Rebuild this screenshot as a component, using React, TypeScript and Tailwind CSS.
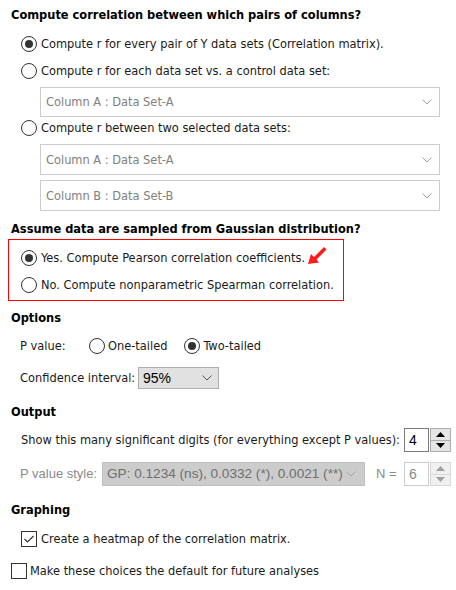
import type { ReactNode } from "react";

const tahoma = { fontFamily: '"DejaVu Sans Condensed", "DejaVu Sans", sans-serif' };
const arial = { fontFamily: '"Liberation Sans", Arial, sans-serif' };

function Radio({ checked = false }: { checked?: boolean }) {
  return (
    <span className="flex h-4 w-4 shrink-0 items-center justify-center rounded-full border border-[#333] bg-white">
      {checked && <span className="h-2 w-2 rounded-full bg-[#333]" />}
    </span>
  );
}

function Checkbox({ checked = false }: { checked?: boolean }) {
  return (
    <span className="flex h-4 w-4 shrink-0 items-center justify-center border border-[#333] bg-white">
      {checked && (
        <svg width="12" height="10" viewBox="0 0 12 10">
          <path d="M1.5 5 L4.5 8 L10.5 2" fill="none" stroke="#333" strokeWidth="1.2" />
        </svg>
      )}
    </span>
  );
}

function Chevron({ color = "#a0a0a0" }: { color?: string }) {
  return (
    <svg width="10" height="6" viewBox="0 0 10 6" className="shrink-0">
      <path d="M0.5 0.5 L5 5 L9.5 0.5" fill="none" stroke={color} strokeWidth="1" />
    </svg>
  );
}

function Select({ label, className = "" }: { label: string; className?: string }) {
  return (
    <div
      className={`ml-[40px] flex w-[400px] items-center justify-between border border-[#cccccc] bg-white pl-[5px] pr-[7px] text-[#808080] ${className}`}
    >
      <span>{label}</span>
      <Chevron />
    </div>
  );
}

function Heading({ children, className = "" }: { children: ReactNode; className?: string }) {
  return <div className={`flex h-[18px] items-center pl-[11px] font-bold text-black ${className}`}>{children}</div>;
}

function Spinner({ value, disabled = false }: { value: string; disabled?: boolean }) {
  const arrow = disabled ? "#a0a0a0" : "#000";
  const btn = disabled ? "border-[#d9d9d9] bg-[#f0f0f0]" : "border-[#adadad] bg-[#e5e5e5]";
  return (
    <div className="flex h-[24px] w-[47px] shrink-0 items-stretch">
      <div
        className={`flex w-[25px] items-center border pl-[4px] text-[14px] ${
          disabled ? "border-[#cccccc] text-[#888]" : "border-[#7a7a7a] text-black"
        }`}
        style={arial}
      >
        {value}
      </div>
      <div className="ml-[1px] flex w-[21px] flex-col">
        <div className={`flex flex-1 items-center justify-center border ${btn}`}>
          <svg width="9" height="5" viewBox="0 0 9 5">
            <path d="M0 5 L4.5 0 L9 5 Z" fill={arrow} />
          </svg>
        </div>
        <div className={`flex flex-1 items-center justify-center border border-t-0 ${btn}`}>
          <svg width="9" height="5" viewBox="0 0 9 5">
            <path d="M0 0 L4.5 5 L9 0 Z" fill={arrow} />
          </svg>
        </div>
      </div>
    </div>
  );
}

export default function App() {
  return (
    <div className="h-[590px] w-[456px] whitespace-nowrap bg-white text-[12.7px] text-[#1a1a1a]" style={tahoma}>
      <div className="pt-[6px]" />
      <Heading>Compute correlation between which pairs of columns?</Heading>

      <div className="mt-[11px] flex h-[18px] items-center gap-[4px] pl-[21px]">
        <Radio checked />
        <span>Compute r for every pair of Y data sets (Correlation matrix).</span>
      </div>
      <div className="mt-[9px] flex h-[18px] items-center gap-[4px] pl-[21px]">
        <Radio />
        <span>Compute r for each data set vs. a control data set:</span>
      </div>
      <Select label="Column A : Data Set-A" className="mt-[7px] h-[30px]" />
      <div className="mt-[2px] flex h-[18px] items-center gap-[4px] pl-[21px]">
        <Radio />
        <span>Compute r between two selected data sets:</span>
      </div>
      <Select label="Column A : Data Set-A" className="mt-[7px] h-[31px]" />
      <Select label="Column B : Data Set-B" className="mt-[5px] h-[31px]" />

      <Heading className="mt-[9px]">Assume data are sampled from Gaussian distribution?</Heading>

      <div className="relative ml-[8px] mt-[1px] h-[62px] w-[336px] border border-[#ff0000]">
        <div className="mt-[9px] flex h-[18px] items-center gap-[4px] pl-[12px]">
          <Radio checked />
          <span>Yes. Compute Pearson correlation coefficients.</span>
        </div>
        <div className="mt-[9px] flex h-[18px] items-center gap-[4px] pl-[12px]">
          <Radio />
          <span>No. Compute nonparametric Spearman correlation.</span>
        </div>
        <svg className="absolute left-[298px] top-[4px]" width="22" height="22" viewBox="0 0 22 22">
          <path d="M1 20 L4 10 L7 13 L17 3 L19.5 5.5 L9.5 15.5 L12 18.5 Z" fill="#ff1a1a" />
        </svg>
      </div>

      <Heading className="mt-[8px]">Options</Heading>
      <div className="mt-[10px] flex h-[18px] items-center pl-[20px]">
        <span className="w-[69px]">P value:</span>
        <span className="flex items-center gap-[3px]">
          <Radio />
          <span>One-tailed</span>
        </span>
        <span className="ml-[17px] flex items-center gap-[3px]">
          <Radio checked />
          <span>Two-tailed</span>
        </span>
      </div>
      <div className="mt-[12px] flex h-[22px] items-center pl-[20px]">
        <span className="w-[118px]">Confidence interval:</span>
        <div
          className="flex h-[22px] w-[81px] items-center justify-between border border-[#adadad] bg-[#e1e1e1] pl-[4px] pr-[6px] text-[14px] text-black"
          style={arial}
        >
          <span>95%</span>
          <Chevron color="#555" />
        </div>
      </div>

      <Heading className="mt-[14px]">Output</Heading>
      <div className="mt-[7px] flex h-[24px] items-center pl-[21px]">
        <span className="w-[383px]">Show this many significant digits (for everything except P values):</span>
        <Spinner value="4" />
      </div>
      <div className="mt-[10px] flex h-[24px] items-center pl-[20px] text-[13px] text-[#8a8a8a]" style={arial}>
        <span className="w-[82px]">P value style:</span>
        <div className="flex h-[24px] w-[263px] shrink-0 items-center justify-between border border-[#bfbfbf] bg-[#cccccc] pl-[4px] pr-[8px] text-[13.6px] text-[#6f6f6f]">
          <span>GP: 0.1234 (ns), 0.0332 (*), 0.0021 (**)</span>
          <Chevron color="#a8a8a8" />
        </div>
        <span className="ml-[11px] w-[28px]">N =</span>
        <Spinner value="6" disabled />
      </div>

      <Heading className="mt-[15px]">Graphing</Heading>
      <div className="mt-[11px] flex h-[18px] items-center gap-[4px] pl-[21px]">
        <Checkbox checked />
        <span>Create a heatmap of the correlation matrix.</span>
      </div>
      <div className="mt-[14px] flex h-[18px] items-center gap-[3px] pl-[11px]">
        <Checkbox />
        <span>Make these choices the default for future analyses</span>
      </div>
    </div>
  );
}
